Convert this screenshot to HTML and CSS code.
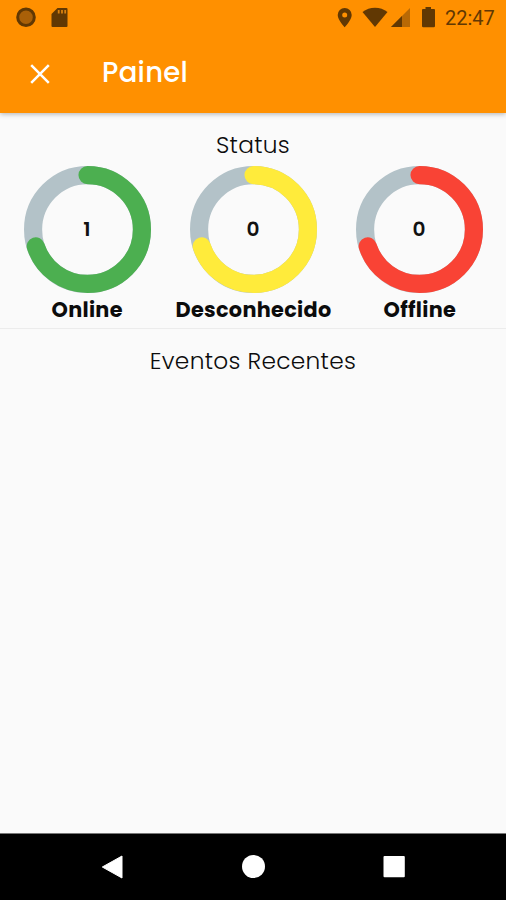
FILE: index.html
```html
<!DOCTYPE html>
<html lang="pt-BR">
<head>
    <meta charset="UTF-8">
    <meta name="viewport" content="width=device-width, initial-scale=1.0">
    <title>Painel</title>
    <link rel="stylesheet" href="styles.css">
</head>
<body>
    <div class="screen">
        <header class="app-header">
            <div class="status-bar">
                <svg class="status-icons-left" width="60" height="36" viewBox="0 0 60 36">
                    <circle cx="16" cy="17.3" r="8.3" fill="#a96008" stroke="#613803" stroke-width="3"/>
                    <path d="M47.500 8H56.500a1 1 0 0 1 1 1v17a1 1 0 0 1-1 1H42.500a1 1 0 0 1-1-1V14z" fill="#613803"/>
                    <path d="M48.700 10v3.500M52 10v3.500M55.200 10v3.500" stroke="#d98210" stroke-width="1.8"/>
                </svg>
                <div class="status-right">
                    <svg width="110" height="36" viewBox="0 0 110 36">
                        <path fill="#613803" fill-rule="evenodd" d="M14.700 8a7 7 0 0 0-7 7c0 5 7 12.300 7 12.300S21.700 20 21.700 15a7 7 0 0 0-7-7zm0 4.400a2.500 2.500 0 1 1 0 5 2.500 2.500 0 0 1 0-5z"/>
                        <path fill="#613803" d="M32.500 12C39.500 6.300 50.500 6.300 57.500 12L45 27z"/>
                        <path fill="#b86905" d="M80 8v19H61z"/>
                        <path fill="#613803" d="M72 16v11H61z"/>
                        <path fill="#613803" d="M95.500 7h5.500v2h3a1 1 0 0 1 1 1v16a1.300 1.300 0 0 1-1.300 1.300H93.300A1.300 1.300 0 0 1 92 26V10a1 1 0 0 1 1-1h2.500z"/>
                    </svg>
                    <span class="clock">22:47</span>
                </div>
            </div>
            <div class="toolbar">
                <svg class="close-icon" width="20" height="20" viewBox="0 0 20 20">
                    <path d="M1.200 1.200l17.600 17.600M18.800 1.200L1.200 18.800" stroke="#fff" stroke-width="2.500"/>
                </svg>
                <h1 class="title">Painel</h1>
            </div>
        </header>

        <main class="content">
            <section class="status-section">
                <h2 class="section-title status-title">Status</h2>
                <div class="gauges">
                    <div class="gauge">
                        <svg class="ring" viewBox="0 0 128 128">
                            <circle class="track" cx="64" cy="64" r="54"/>
                            <circle class="value online" cx="64" cy="64" r="54" pathLength="100"/>
                            <text x="63.500" y="70.500">1</text>
                        </svg>
                        <span class="label label-online">Online</span>
                    </div>
                    <div class="gauge">
                        <svg class="ring" viewBox="0 0 128 128">
                            <circle class="track" cx="64" cy="64" r="54"/>
                            <circle class="value unknown" cx="64" cy="64" r="54" pathLength="100"/>
                            <text x="63.500" y="70.500">0</text>
                        </svg>
                        <span class="label label-unknown">Desconhecido</span>
                    </div>
                    <div class="gauge">
                        <svg class="ring" viewBox="0 0 128 128">
                            <circle class="track" cx="64" cy="64" r="54"/>
                            <circle class="value offline" cx="64" cy="64" r="54" pathLength="100"/>
                            <text x="63.500" y="70.500">0</text>
                        </svg>
                        <span class="label label-offline">Offline</span>
                    </div>
                </div>
            </section>
            <section class="events-section">
                <h2 class="section-title events-title">Eventos Recentes</h2>
            </section>
        </main>

        <nav class="nav-bar">
            <svg width="24" height="24" viewBox="0 0 24 24"><path d="M22 1v22L2.300 12z" fill="#fff" stroke="#fff" stroke-linejoin="round"/></svg>
            <svg width="24" height="24" viewBox="0 0 24 24"><circle cx="12.500" cy="11.500" r="11.500" fill="#fff"/></svg>
            <svg width="24" height="24" viewBox="0 0 24 24"><rect x="1.500" y="1" width="21.300" height="21.300" rx="1" fill="#fff"/></svg>
        </nav>
    </div>
</body>
</html>
```
FILE: styles.css
```css
* {
    box-sizing: border-box;
}

body {
    margin: 0;
    font-family: Poppins, Inter, sans-serif;
    background-color: #fafafa;
    color: #0c0c0c;
}

.screen {
    display: flex;
    flex-direction: column;
    height: 900px;
    overflow: hidden;
}

.app-header {
    height: 113px;
    flex-shrink: 0;
    background-color: #ff9000;
    box-shadow: 0 1px 5px rgba(0, 0, 0, 0.3);
}

.status-bar {
    display: flex;
    justify-content: space-between;
    height: 36px;
    padding: 0 11px 0 10px;
}

.status-right {
    display: flex;
    gap: 5px;
}

.clock {
    width: 50px;
    font-family: Roboto, sans-serif;
    font-size: 20px;
    line-height: 37px;
    color: #613803;
}

.toolbar {
    display: flex;
    align-items: center;
    height: 75px;
    padding-left: 30px;
}

.title {
    margin: -2px 0 0 52px;
    font-size: 27.500px;
    font-weight: 500;
    line-height: 40px;
    letter-spacing: 0.3px;
    color: #fff;
}

.content {
    flex: 1;
}

.status-section {
    height: 216px;
    padding-top: 14px;
    border-bottom: 1px solid #ececec;
}

.section-title {
    margin: 0;
    font-size: 23.300px;
    font-weight: 300;
    line-height: 36px;
    letter-spacing: 0.3px;
    text-align: center;
}

.gauges {
    display: flex;
    padding: 0 3px 0 4px;
    margin-top: 2px;
}

.gauge {
    flex: 1 1 0;
    min-width: 0;
    display: flex;
    flex-direction: column;
    align-items: center;
}

.ring {
    width: 129px;
    height: 129px;
}

.ring circle {
    fill: none;
    stroke-width: 18;
}

.ring .track {
    stroke: #b3c2c8;
}

.ring .value {
    stroke-dasharray: 70 100;
    stroke-linecap: round;
    transform: rotate(-90deg);
    transform-origin: 64px 64px;
}

.ring .online {
    stroke: #4caf50;
}

.ring .unknown {
    stroke: #ffeb3b;
}

.ring .offline {
    stroke: #f94335;
}

.ring text {
    font-size: 20px;
    font-weight: 600;
    text-anchor: middle;
    fill: #111;
}

.label {
    font-size: 20.800px;
    font-weight: 700;
    line-height: 31px;
    letter-spacing: 0.300px;
    white-space: nowrap;
}

.events-section {
    padding-top: 14px;
}

.nav-bar {
    display: flex;
    justify-content: center;
    align-items: center;
    gap: 117px;
    height: 67px;
    flex-shrink: 0;
    border-top: 1px solid #777;
    background-color: #000;
}
```
